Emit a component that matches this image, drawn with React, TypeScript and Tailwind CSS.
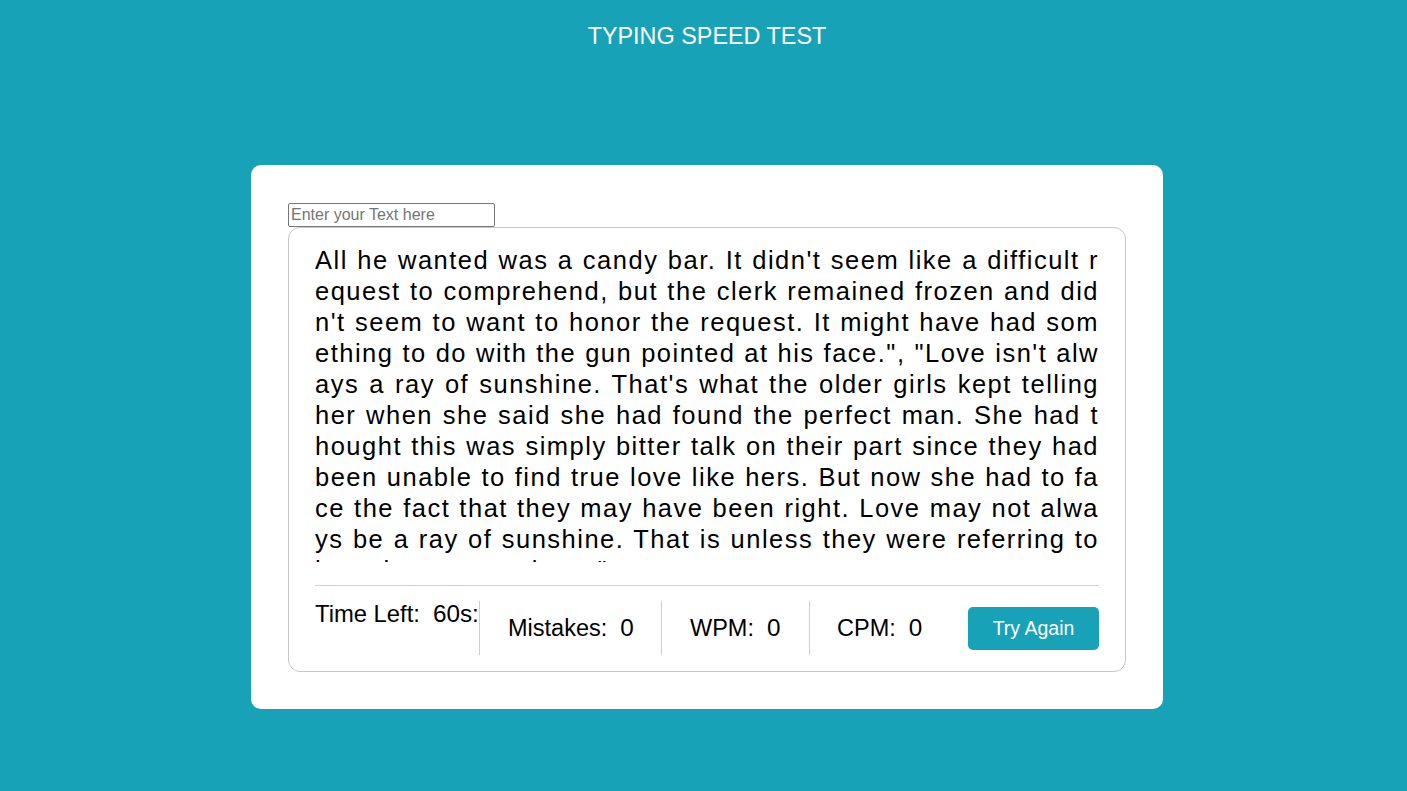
import { useState } from "react";

const PARAGRAPH =
  `All he wanted was a candy bar. It didn't seem like a difficult request to comprehend, but the clerk remained frozen and didn't seem to want to honor the request. It might have had something to do with the gun pointed at his face.", "Love isn't always a ray of sunshine. That's what the older girls kept telling her when she said she had found the perfect man. She had thought this was simply bitter talk on their part since they had been unable to find true love like hers. But now she had to face the fact that they may have been right. Love may not always be a ray of sunshine. That is unless they were referring to how the sun can burn."`;

export default function App() {
  const [value, setValue] = useState("");

  return (
    <div className="min-h-screen bg-[#17a2b8] pl-[7px] font-['Liberation_Sans',Arial,sans-serif]">
      {/* Title */}
      <h1 className="pt-[23px] text-center text-[23.4px] font-normal leading-[26px] text-white">
        TYPING SPEED TEST
      </h1>

      {/* Card */}
      <div className="mx-auto mt-[116px] w-[912px] rounded-[10px] bg-white px-[37px] pt-[38px] pb-[37px]">
        <input
          type="text"
          value={value}
          onChange={(e) => setValue(e.target.value)}
          placeholder="Enter your Text here"
          className="block h-[24px] w-[207px] rounded-[2px] border border-[#767676] px-[2px] text-[16px] text-black placeholder:text-[#757575] focus:outline-none"
        />

        <div className="rounded-[12px] border border-[#c8c8c8] px-[26px] pt-[17px] pb-[16px]">
          {/* Typing text */}
          <div className="h-[317px] overflow-hidden">
            <p className="text-justify text-[25.5px] leading-[31px] tracking-[1.5px] break-all text-black">
              {PARAGRAPH}
            </p>
          </div>

          {/* Results row */}
          <div className="mt-[23px] flex h-[70px] items-stretch border-t border-[#cfcfcf] pt-[15px] text-black">
            <div className="flex w-[165px] items-start border-r border-[#cfcfcf]">
              <span className="text-[23.8px] leading-[26px]">Time Left:</span>
              <span className="ml-[13px] text-[24.3px] leading-[26px]">60s:</span>
            </div>
            <div className="flex w-[182px] items-center border-r border-[#cfcfcf] pl-[28px]">
              <span className="text-[23.5px] leading-[26px]">Mistakes:</span>
              <span className="ml-[13px] text-[24.3px] leading-[26px]">0</span>
            </div>
            <div className="flex w-[148px] items-center border-r border-[#cfcfcf] pl-[28px]">
              <span className="text-[23.5px] leading-[26px]">WPM:</span>
              <span className="ml-[13px] text-[24.3px] leading-[26px]">0</span>
            </div>
            <div className="flex items-center pl-[27px]">
              <span className="text-[23.5px] leading-[26px]">CPM:</span>
              <span className="ml-[13px] text-[24.3px] leading-[26px]">0</span>
            </div>
            <button
              onClick={() => setValue("")}
              className="ml-auto h-[43px] w-[131px] cursor-pointer self-center rounded-[5px] bg-[#17a2b8] pt-[1px] text-[19.5px] text-white"
            >
              Try Again
            </button>
          </div>
        </div>
      </div>
    </div>
  );
}
